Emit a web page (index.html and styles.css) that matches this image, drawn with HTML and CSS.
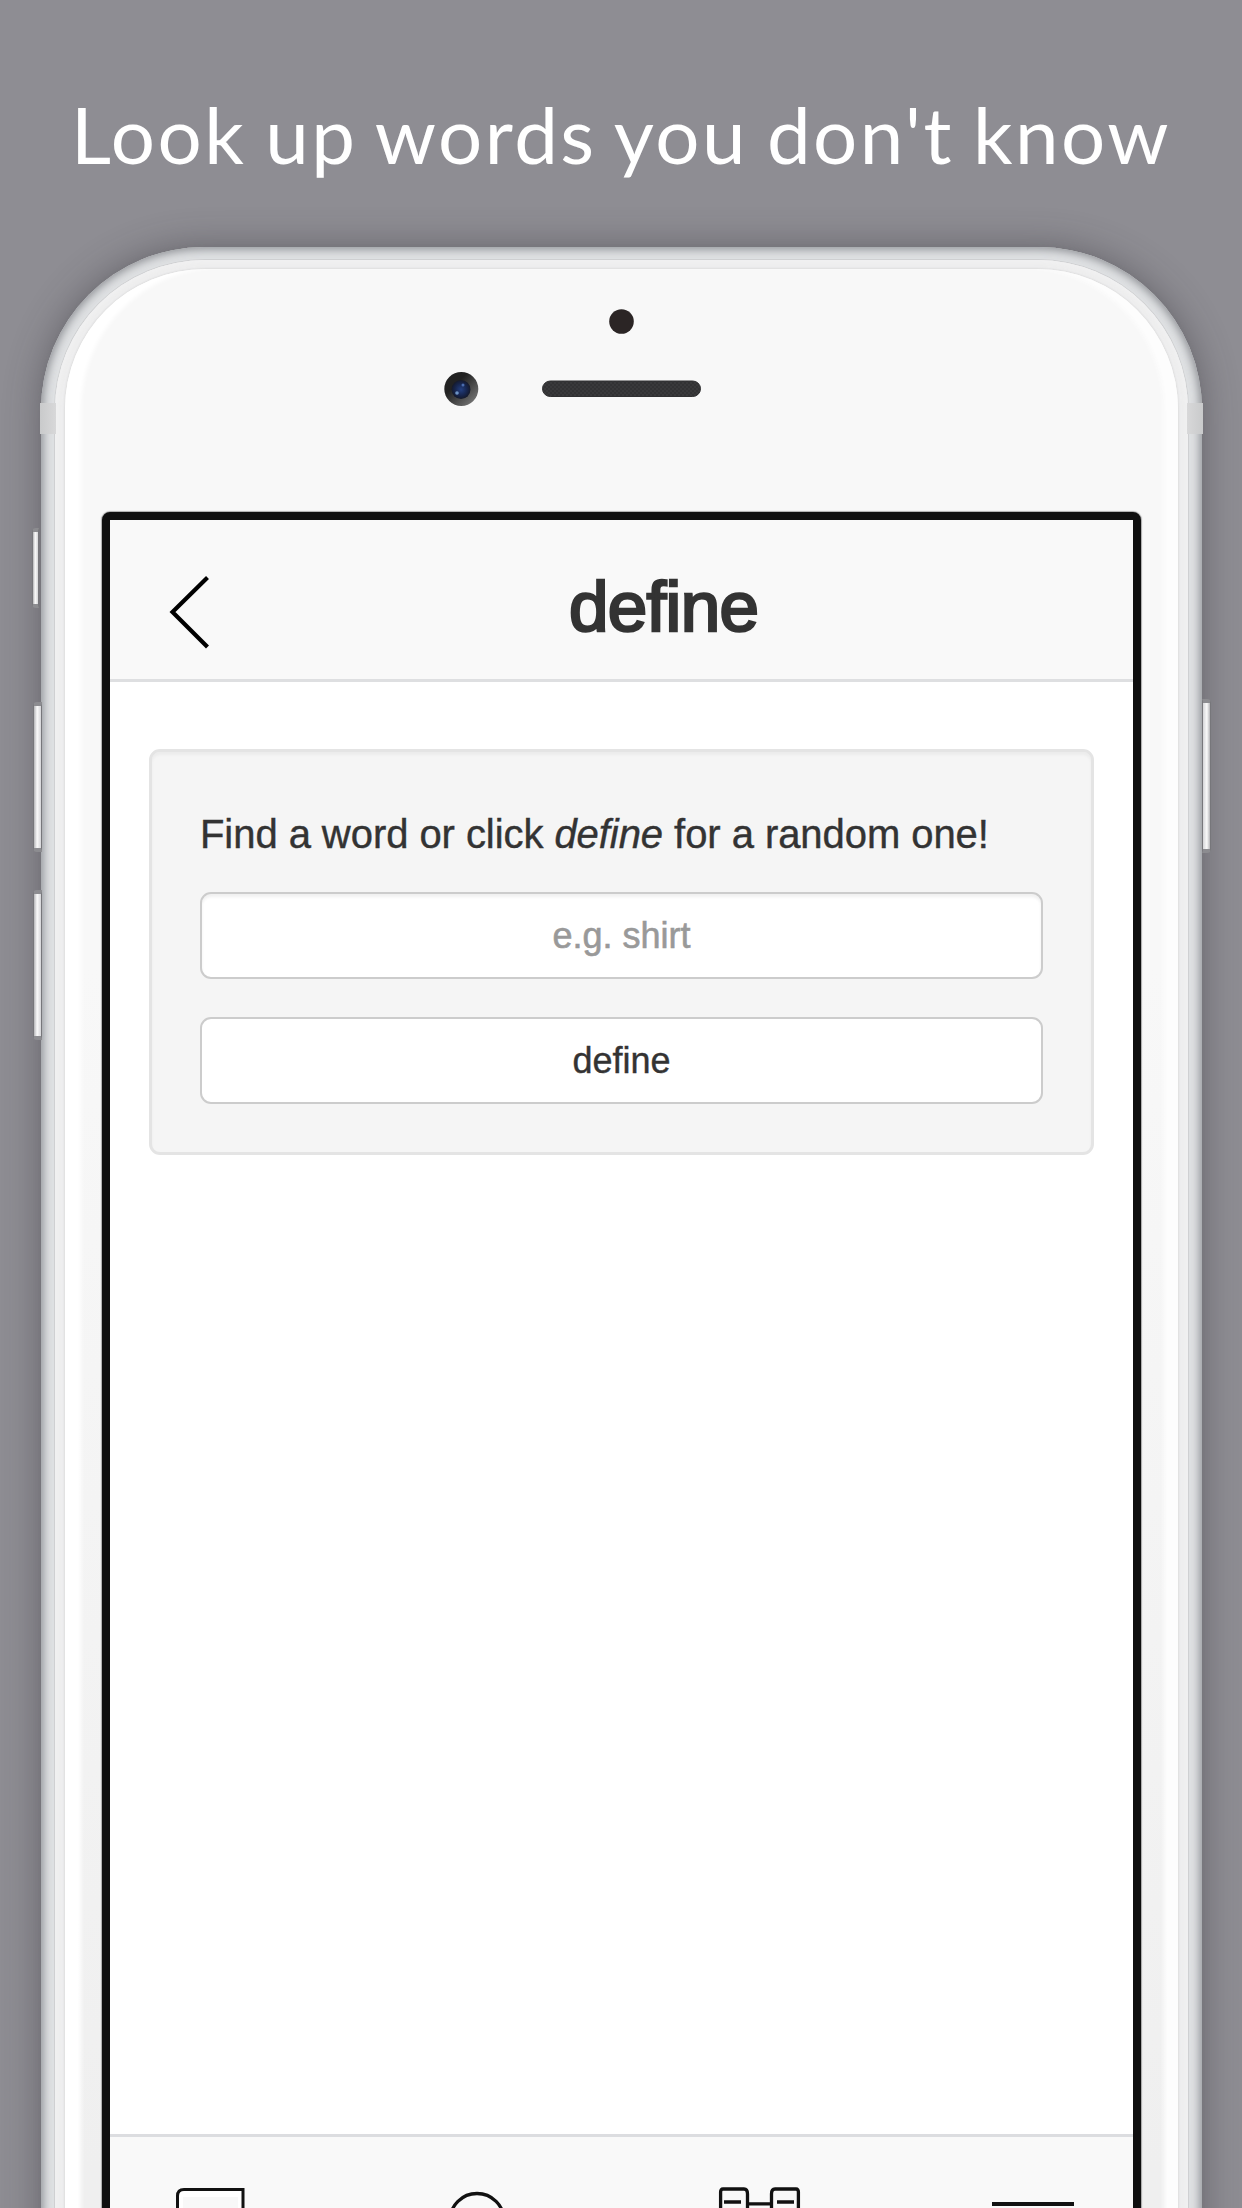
FILE: index.html
```html
<!DOCTYPE html>
<html lang="en">
<head>
<meta charset="utf-8">
<title>define</title>
<link rel="stylesheet" href="styles.css">
</head>
<body>
<main class="promo">
  <h1 class="headline">Look up words you don't know</h1>
  <div class="phone">
    <i class="antenna antenna-left"></i>
    <i class="antenna antenna-right"></i>
    <i class="key key-mute"></i>
    <i class="key key-up"></i>
    <i class="key key-down"></i>
    <i class="key key-power"></i>
    <div class="rim">
      <div class="face">
        <div class="sensors">
          <svg width="300" height="130" viewBox="0 0 300 130">
            <defs>
              <linearGradient id="ring" x1="0" y1="0" x2="1" y2="1">
                <stop offset="0.35" stop-color="#222"/>
                <stop offset="1" stop-color="#858585"/>
              </linearGradient>
              <radialGradient id="lens">
                <stop offset="0" stop-color="#243f80"/>
                <stop offset="0.6" stop-color="#17264f"/>
                <stop offset="1" stop-color="#15192a"/>
              </radialGradient>
              <pattern id="mesh" width="4" height="4" patternUnits="userSpaceOnUse">
                <rect width="4" height="4" fill="#39393b"/>
                <circle cx="1" cy="1" r="0.8" fill="#29292b"/>
                <circle cx="3" cy="3" r="0.8" fill="#29292b"/>
              </pattern>
            </defs>
            <circle cx="201.5" cy="31.5" r="12.3" fill="#2b2525"/>
            <circle cx="41.3" cy="99" r="17" fill="url(#ring)"/>
            <circle cx="41" cy="99.500" r="9.500" fill="url(#lens)"/>
            <circle cx="37" cy="103" r="1.800" fill="#6d93c4"/>
            <circle cx="43" cy="95" r="1.500" fill="#4a6cae"/>
            <rect x="122.500" y="91" width="158" height="15.500" rx="7.750" fill="url(#mesh)" stroke="#303032"/>
          </svg>
        </div>
        <div class="screen">
          <header class="bar">
            <svg class="back" width="44" height="80" viewBox="0 0 44 80"><path d="M40.500 5.500 5.500 40 40.500 75" fill="none" stroke="#000" stroke-width="4.200"/></svg>
            <h2 class="title">define</h2>
          </header>
          <section class="content">
            <form class="card">
              <label class="hint" for="word">Find a word or click <em>define</em> for a random one!</label>
              <input class="field" id="word" type="text" placeholder="e.g. shirt">
              <button class="submit" type="button">define</button>
            </form>
          </section>
          <nav class="tabs">
            <svg class="tab" width="72" height="90" viewBox="0 0 72 90" fill="none" stroke="#111" stroke-width="3"><path d="M3.500 90V10Q3.500 3.500 10 3.500H69V90" fill="#fff"/><path d="M9 90V11H64V90" fill="#f8f8f8" stroke="none"/></svg>
            <svg class="tab tab-search" width="72" height="90" viewBox="0 0 72 90" fill="none" stroke="#111" stroke-width="3.300"><circle cx="30" cy="34.500" r="27"/><path d="M49 53 70 76"/></svg>
            <svg class="tab tab-explore" width="84" height="90" viewBox="0 0 84 90" fill="none" stroke="#111" stroke-width="3.300"><path d="M2.600 90V6Q2.600 3 5 3H26Q29.500 3 29.500 8V90M80.400 90V6Q80.400 3 78 3H57Q53.500 3 53.500 8V90M6 16H23M59 16H76M29.500 17.800H53.500"/></svg>
            <svg class="tab tab-menu" width="82" height="90" viewBox="0 0 82 90" fill="none" stroke="#111" stroke-width="4"><path d="M0 18H82M0 43H82M0 68H82"/></svg>
          </nav>
        </div>
      </div>
    </div>
  </div>
</main>
</body>
</html>
```
FILE: styles.css
```css
* {
  box-sizing: border-box;
}

body {
  margin: 0;
  background: #8e8d93;
  font-family: "Liberation Sans", Arial, sans-serif;
  font-variant-ligatures: none;
  color: #333;
}

.promo {
  height: 2208px;
  overflow: hidden;
}

.headline {
  margin: 0;
  height: 247px;
  padding-top: 88px;
  text-align: center;
  white-space: nowrap;
  font: 400 78px/92px Lato, sans-serif;
  letter-spacing: 2.5px;
  word-spacing: -3.5px;
  color: #fff;
}

.phone {
  position: relative;
  width: 1161px;
  height: 2300px;
  margin-left: 41px;
  padding: 13px 14px 0;
  border-radius: 163px 163px 0 0;
  background: #dfe1e3;
  box-shadow:
    0 0 3px #77777c,
    0 0 36px rgba(50, 48, 56, 0.45),
    inset 0 0 8px 2px #909297,
    inset 0 0 14px #d0d2d4;
}

.rim {
  height: 100%;
  padding: 9px 10px 0;
  border-radius: 150px 150px 0 0;
  background: #eeeeef;
  box-shadow: 0 0 0 1px #cfd0d2, inset 0 0 6px 2px #f2f2f3, inset 0 0 0 6px #ededed;
}

.face {
  height: 100%;
  padding: 21px 37px 0;
  border-radius: 140px 140px 0 0;
  background: linear-gradient(#f8f8f8 0, #f8f8f8 700px, #efefef 1900px);
  box-shadow:
    0 0 2px 1px #dedede,
    inset 18px 0 4px -2px #fff,
    inset -16px 0 4px -2px #fdfdfd;
}

.sensors {
  height: 222px;
  padding-left: 318px;
}

.screen {
  display: flex;
  flex-direction: column;
  width: 1039px;
  height: 1850px;
  border: 8px solid #0f0f0f;
  border-radius: 8px 8px 0 0;
  background: #fff;
  box-shadow: 0 0 1px 1px rgba(120, 120, 120, 0.6);
}

.bar {
  display: flex;
  align-items: center;
  height: 162px;
  padding-left: 57px;
  background: #f9f9f9;
  border-bottom: 3px solid #dedfe1;
}

.back {
  margin-top: 25px;
}

.title {
  margin: 0 0 0 358px;
  padding-top: 14px;
  font: 400 71px/80px "Liberation Sans", Arial, sans-serif;
  letter-spacing: -0.7px;
  -webkit-text-stroke: 2.6px #333;
}

.content {
  height: 1452px;
  padding: 67px 39px 0;
}

.card {
  display: flex;
  flex-direction: column;
  height: 406px;
  padding: 58px 48px 0;
  border: 3px solid #e4e4e4;
  border-radius: 11px;
  background: #f5f5f5;
  box-shadow: inset 0 3px 3px rgba(0, 0, 0, 0.04);
}

.hint {
  height: 82px;
  white-space: nowrap;
  font-size: 40px;
  line-height: 48px;
  letter-spacing: -0.06px;
  -webkit-text-stroke: 0.4px #333;
}

.field,
.submit {
  height: 87px;
  margin: 0;
  padding: 0;
  border: 2px solid #ccc;
  border-radius: 11px;
  background: #fff;
  font: 36px/48px "Liberation Sans", Arial, sans-serif;
  font-variant-ligatures: none;
  text-align: center;
  color: #333;
}

.field {
  box-shadow: inset 0 3px 3px rgba(0, 0, 0, 0.06);
}

.field::placeholder {
  color: #999;
  opacity: 1;
  -webkit-text-stroke: 0.6px #999;
}

.submit {
  margin-top: 38px;
  -webkit-text-stroke: 0.4px #333;
}

.tabs {
  display: flex;
  flex: 1;
  align-items: flex-start;
  padding: 49px 0 0 64px;
  background: #f9f9f9;
  border-top: 3px solid #dcdde0;
}

.tab {
  flex: none;
}

.tab-search {
  margin-left: 201px;
}

.tab-explore {
  margin-left: 199px;
}

.tab-menu {
  margin-left: 190px;
}

/* Hardware details on the edges of the case */
.antenna,
.key {
  position: absolute;
}

.antenna {
  top: 156px;
  width: 16px;
  height: 31px;
  background: linear-gradient(90deg, #c9cacb, #d8d8d9);
}

.antenna-left {
  left: -1px;
}

.antenna-right {
  right: -1px;
  transform: scaleX(-1);
}

.key {
  left: -8px;
  width: 9px;
  height: 150px;
  border: 1px solid #77777b;
  border-top: 4px solid #8c8c90;
  border-bottom: 4px solid #8c8c90;
  border-radius: 4px 0 0 4px;
  background: linear-gradient(90deg, #b5b5b8, #fafafa 45%, #d5d5d8);
}

.key-mute {
  top: 281px;
  left: -9px;
  width: 7px;
  height: 80px;
}

.key-up {
  top: 455px;
}

.key-down {
  top: 643px;
}

.key-power {
  top: 452px;
  right: -9px;
  left: auto;
  height: 154px;
  transform: scaleX(-1);
}
```
